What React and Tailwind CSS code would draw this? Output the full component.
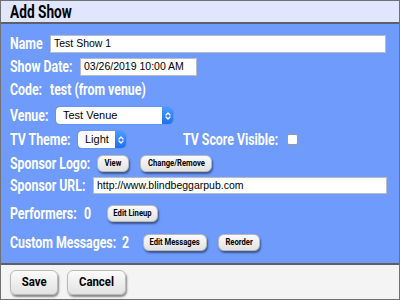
import React from "react";

const LBL = { fontFamily: 'Roboto, "Liberation Sans", sans-serif' };
const INP = { fontFamily: '"Liberation Sans", Arial, sans-serif' };

function L({ children, className = "", scale = "scale-x-[0.77]" }) {
  return (
    <span className={"shrink-0 whitespace-nowrap " + className}>
      <span className={"inline-block origin-left " + scale}>{children}</span>
    </span>
  );
}

function Btn({ children, className = "", scale = "scale-x-[0.85]" }) {
  return (
    <div
      className={"flex shrink-0 items-center justify-center whitespace-nowrap rounded-[6px] border border-[#b9b9b9] bg-gradient-to-b from-[#fbfbfb] to-[#e2e2e2] font-bold text-black shadow-[1px_2px_2px_rgba(0,0,0,0.45)] " + className}
      style={LBL}
    >
      <span className={"inline-block " + scale}>{children}</span>
    </div>
  );
}

function Stepper() {
  return (
    <div className="flex h-full w-[11px] items-center justify-center rounded-r-[4px] bg-gradient-to-b from-[#4a9bff] to-[#1e6ff0]">
      <svg width="6" height="10" viewBox="0 0 6 10" fill="none" stroke="white" strokeWidth="1.3" strokeLinecap="round" strokeLinejoin="round">
        <path d="M1 4 L3 2 L5 4" />
        <path d="M1 6 L3 8 L5 6" />
      </svg>
    </div>
  );
}

function Select({ value, className }) {
  return (
    <div className={"flex shrink-0 items-center rounded-[4px] bg-white shadow-[0_0_1px_rgba(0,0,0,0.5)] " + className}>
      <div className="flex-1 pl-[7px] text-[11px] font-normal text-black" style={INP}>{value}</div>
      <Stepper />
    </div>
  );
}

function Input({ value, className }) {
  return (
    <div className={"flex shrink-0 items-center whitespace-nowrap border border-[#b8bcc8] bg-white pl-[3px] text-[10.5px] font-normal text-black " + className} style={INP}>
      {value}
    </div>
  );
}

export default function App() {
  return (
    <div className="flex h-[300px] w-[400px] flex-col border border-[#707070] bg-[#6e9bfc]">
      <div className="flex h-[23px] shrink-0 items-center border-b-2 border-[#5f6066] bg-[#dfe6fe] pl-[9px]">
        <span className="inline-block origin-left scale-x-[0.76] whitespace-nowrap text-[18px] font-bold text-black" style={LBL}>Add Show</span>
      </div>
      <div className="flex flex-1 flex-col pl-[9px] text-[16px] font-bold text-white" style={LBL}>
        <div className="mt-[11px] flex h-[18px] items-center">
          <L className="w-[40px]">Name</L>
          <Input value="Test Show 1" className="h-[18px] w-[336px]" />
        </div>
        <div className="mt-[5px] flex h-[18px] items-center">
          <L className="w-[70px]">Show Date:</L>
          <Input value="03/26/2019 10:00 AM" className="h-[18px] w-[117px]" />
        </div>
        <div className="mt-[6px] flex h-[16px] items-center">
          <L className="w-[40px]">Code:</L>
          <L>test (from venue)</L>
        </div>
        <div className="mt-[9px] flex h-[17px] items-center">
          <L className="w-[46px]">Venue:</L>
          <Select value="Test Venue" className="h-[17px] w-[117px]" />
        </div>
        <div className="mt-[7px] flex h-[17px] items-center">
          <L className="w-[68px]">TV Theme:</L>
          <Select value="Light" className="h-[17px] w-[48px]" />
          <L className="ml-[57px] w-[104px]">TV Score Visible:</L>
          <div className="h-[11px] w-[11px] shrink-0 rounded-[2px] border border-[#9a9a9a] bg-white" />
        </div>
        <div className="mt-[7px] flex h-[17px] items-center">
          <L className="w-[87px]">Sponsor Logo:</L>
          <Btn className="h-[17px] w-[32px] text-[9px]">View</Btn>
          <Btn className="ml-[11px] h-[17px] w-[72px] text-[9px]">Change/Remove</Btn>
        </div>
        <div className="mt-[5px] flex h-[17px] items-center">
          <L className="w-[83px]">Sponsor URL:</L>
          <Input value="http://www.blindbeggarpub.com" className="h-[17px] w-[294px]" />
        </div>
        <div className="mt-[11px] flex h-[17px] items-center">
          <L className="w-[74px]">Performers:</L>
          <L className="w-[23px]">0</L>
          <Btn className="h-[17px] w-[51px] text-[9px]">Edit Lineup</Btn>
        </div>
        <div className="mt-[12px] flex h-[17px] items-center">
          <L className="w-[112px]">Custom Messages:</L>
          <L className="w-[21px]">2</L>
          <Btn className="h-[17px] w-[64px] text-[9px]">Edit Messages</Btn>
          <Btn className="ml-[11px] h-[17px] w-[42px] text-[9px]">Reorder</Btn>
        </div>
      </div>
      <div className="flex h-[36px] shrink-0 items-center gap-[9px] border-t-2 border-[#5f6066] bg-[#f4f4f4] pl-[9px]">
        <Btn className="h-[25px] w-[48px] text-[12px]" scale="scale-x-[0.95]">Save</Btn>
        <Btn className="h-[25px] w-[59px] text-[12px]" scale="scale-x-[0.95]">Cancel</Btn>
      </div>
    </div>
  );
}
